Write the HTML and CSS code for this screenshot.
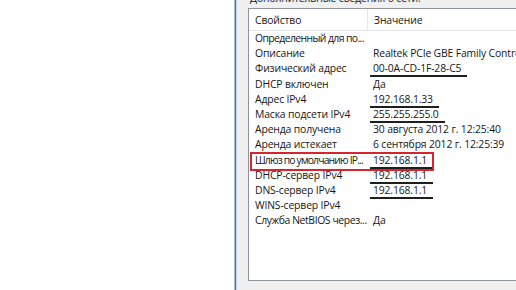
FILE: index.html
```html
<!DOCTYPE html>
<html lang="ru">
<head>
<meta charset="utf-8">
<title>Сведения о сети</title>
<link rel="stylesheet" href="styles.css">
</head>
<body>
<div class="page">
  <div class="blank"></div>
  <div class="window">
    <div class="caption">Дополнительные сведения о сети:</div>
    <div class="list">
      <div class="head">
        <div class="hc c1">Свойство</div>
        <div class="hc c2">Значение</div>
      </div>
      <div class="row"><div class="c1 tight">Определенный для по...</div><div class="c2"></div></div>
      <div class="row"><div class="c1">Описание</div><div class="c2">Realtek PCIe GBE Family Controller</div></div>
      <div class="row"><div class="c1">Физический адрес</div><div class="c2"><span class="ul ul-long">00-0A-CD-1F-28-C5</span></div></div>
      <div class="row"><div class="c1">DHCP включен</div><div class="c2">Да</div></div>
      <div class="row"><div class="c1">Адрес IPv4</div><div class="c2"><span class="ul">192.168.1.33</span></div></div>
      <div class="row"><div class="c1">Маска подсети IPv4</div><div class="c2"><span class="ul">255.255.255.0</span></div></div>
      <div class="row"><div class="c1">Аренда получена</div><div class="c2">30 августа 2012 г. 12:25:40</div></div>
      <div class="row"><div class="c1">Аренда истекает</div><div class="c2">6 сентября 2012 г. 12:25:39</div></div>
      <div class="row marked"><div class="c1 tighter">Шлюз по умолчанию IP...</div><div class="c2"><span class="ul">192.168.1.1</span></div><div class="redbox"></div></div>
      <div class="row"><div class="c1">DHCP-сервер IPv4</div><div class="c2"><span class="ul">192.168.1.1</span></div></div>
      <div class="row"><div class="c1">DNS-сервер IPv4</div><div class="c2"><span class="ul">192.168.1.1</span></div></div>
      <div class="row"><div class="c1">WINS-сервер IPv4</div><div class="c2"></div></div>
      <div class="row"><div class="c1 semi">Служба NetBIOS через...</div><div class="c2">Да</div></div>
    </div>
  </div>
</div>
</body>
</html>
```
FILE: styles.css
```css
html, body {
  margin: 0;
  padding: 0;
  background: #ffffff;
}
.page {
  display: flex;
  width: 516px;
  height: 290px;
  overflow: hidden;
  font-family: "Open Sans", "Noto Sans", sans-serif;
  font-size: 10.4px;
  letter-spacing: -0.15px;
  color: #161616;
}
.blank {
  width: 234px;
  flex: none;
  background: #ffffff;
}
.window {
  flex: 1;
  min-width: 0;
  background: #f0f0f0;
  border-left: 1px solid #a9bdd0;
  box-shadow: inset 1px 0 0 #5d6f80, inset 2px 0 0 #c9d7e4;
  padding-left: 13px;
  display: flex;
  flex-direction: column;
  overflow: hidden;
}
.caption {
  height: 8px;
  line-height: 8px;
  margin-top: -6px;
  padding-left: 2px;
  white-space: nowrap;
  color: #222;
}
.list {
  margin-top: 6px;
  height: 271px;
  background: #ffffff;
  border: 1px solid #8e949c;
  border-right: none;
  display: flex;
  flex-direction: column;
  overflow: hidden;
}
.head {
  display: flex;
  height: 21px;
  border-bottom: 1px solid #e3e6ea;
  flex: none;
}
.hc {
  display: flex;
  align-items: center;
}
.head .c1 {
  border-right: 1px solid #e3e6ea;
}
.c1 {
  width: 112px;
  padding-left: 6px;
  flex: none;
  white-space: nowrap;
}
.tight {
  letter-spacing: -0.6px;
}
.tighter {
  letter-spacing: -0.85px;
}
.semi {
  letter-spacing: -0.4px;
}
.c2 {
  padding-left: 6px;
  white-space: nowrap;
}
.row {
  display: flex;
  height: 15.2px;
  line-height: 15.2px;
  flex: none;
  position: relative;
}
.ul {
  display: inline-block;
  line-height: 13px;
  margin-left: -3px;
  padding-left: 3px;
  padding-right: 6px;
  border-bottom: 2px solid #1e1e1e;
}
.ul-long {
  padding-right: 6px;
}
.redbox {
  position: absolute;
  left: 1px;
  top: -1px;
  width: 180px;
  height: 15px;
  border: 2px solid #d6262c;
}
```
